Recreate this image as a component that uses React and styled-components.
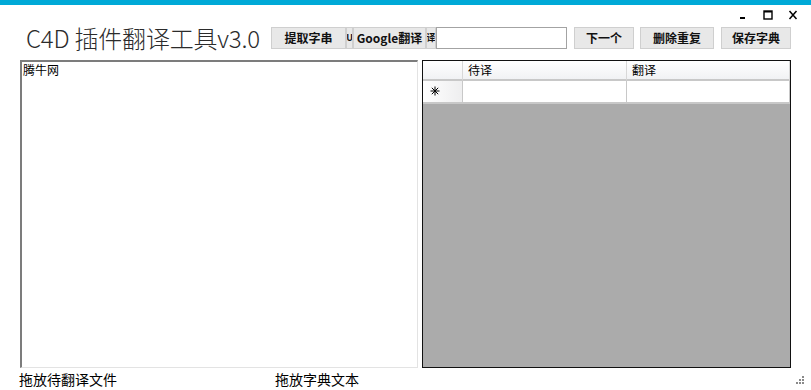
import React from 'react';
import styled, { createGlobalStyle } from 'styled-components';

const GlobalStyle = createGlobalStyle`
    html, body {
        margin: 0;
        padding: 0;
        background: #ffffff;
    }
    * {
        box-sizing: border-box;
    }
`;

const Window = styled.div`
    width: 811px;
    height: 390px;
    display: flex;
    flex-direction: column;
    background: #ffffff;
    font-family: "Noto Sans CJK SC", "Liberation Sans", sans-serif;
    color: #000;
    overflow: hidden;
    position: relative;
`;

const Stripe = styled.div`
    height: 5px;
    background-color: #00a9d7;
`;

const Controls = styled.div`
    height: 20px;
    display: flex;
    justify-content: flex-end;
    align-items: center;
    gap: 15px;
    padding-right: 13px;
`;

const CtrlIcon = styled.svg`
    width: 10px;
    height: 10px;
    display: block;
`;

const Toolbar = styled.div`
    height: 26px;
    display: flex;
    align-items: center;
    padding-left: 26px;
`;

const Title = styled.div`
    font-size: 24px;
    font-weight: 300;
    color: #2b2b2b;
    letter-spacing: -0.2px;
    line-height: 26px;
    width: 245px;
    white-space: nowrap;
`;

const Button = styled.div`
    height: 22px;
    width: ${p => p.w}px;
    margin-left: ${p => p.gap || 0}px;
    display: flex;
    align-items: center;
    justify-content: center;
    background: #e8e8e8;
    border: 1px solid #cfcfcf;
    font-size: ${p => p.fs || 12}px;
    font-weight: 700;
    white-space: nowrap;
    overflow: hidden;
    color: #111;
    padding: 0;
`;

const Input = styled.div`
    width: 131px;
    height: 22px;
    border: 1px solid #a3a3a3;
    background: #fff;
`;

const Main = styled.div`
    display: flex;
    gap: 4px;
    margin-top: 9px;
    padding-left: 20px;
    height: 309px;
`;

const TextArea = styled.div`
    width: 398px;
    height: 100%;
    border-top: 2px solid #7c7c7c;
    border-left: 2px solid #7c7c7c;
    border-right: 1px solid #e3e3e3;
    border-bottom: 1px solid #e3e3e3;
    padding: 1px 1px;
    font-size: 12px;
    line-height: 14px;
`;

const Grid = styled.div`
    width: 369px;
    height: 100%;
    border: 1px solid #111;
    background: #ababab;
    display: flex;
    flex-direction: column;
`;

const GridRow = styled.div`
    display: grid;
    grid-template-columns: 40px 164px 1fr;
    height: ${p => p.h}px;
`;

const HeadCell = styled.div`
    background: linear-gradient(#ffffff, #f1f2f4);
    border-right: 1px solid #d8d8d8;
    border-bottom: 2px solid #c8c8c8;
    font-size: 12px;
    line-height: 17px;
    padding-left: 5px;
`;

const RowHead = styled.div`
    background: linear-gradient(90deg, #ffffff, #eeeeef);
    border-right: 1px solid #c8c8c8;
    border-bottom: 2px solid #c8c8c8;
    display: flex;
    align-items: center;
    padding-left: 7px;
`;

const Cell = styled.div`
    background: #fff;
    border-right: 1px solid #c8c8c8;
    border-bottom: 2px solid #c8c8c8;
`;

const Footer = styled.div`
    display: flex;
    align-items: center;
    height: 22px;
    padding-left: 19px;
    font-size: 14px;
    line-height: 16px;
`;

const Label = styled.div`
    width: ${p => p.w}px;
    white-space: nowrap;
`;

const Grip = styled.div`
    position: absolute;
    right: 7px;
    bottom: 6px;
    width: 7px;
    height: 8px;
`;

const Dot = styled.span`
    position: absolute;
    width: 2px;
    height: 2px;
    background: #8a8a8a;
`;

export default function App() {
    const dots = [[5, 0], [5, 3], [2, 3], [5, 6], [2, 6], [-1, 6]];
    return (
        <Window>
            <GlobalStyle />
            <Stripe />
            <Controls>
                <CtrlIcon viewBox="0 0 10 10">
                    <rect x="2" y="7" width="5" height="2" fill="#000" />
                </CtrlIcon>
                <CtrlIcon viewBox="0 0 10 10">
                    <rect x="1" y="1" width="8" height="8" fill="none" stroke="#000" strokeWidth="1.4" />
                    <rect x="1" y="1" width="8" height="1.5" fill="#000" />
                </CtrlIcon>
                <CtrlIcon viewBox="0 0 10 10">
                    <path d="M1.5 1 L8.5 9 M8.5 1 L1.5 9" stroke="#000" strokeWidth="1.5" />
                </CtrlIcon>
            </Controls>
            <Toolbar>
                <Title>C4D 插件翻译工具v3.0</Title>
                <Button w={75}>提取字串</Button>
                <Button w={7} fs={9}>U</Button>
                <Button w={73}>Google翻译</Button>
                <Button w={10} fs={9}>译</Button>
                <Input />
                <Button w={60} gap={7}>下一个</Button>
                <Button w={74} gap={6}>删除重复</Button>
                <Button w={70} gap={7}>保存字典</Button>
            </Toolbar>
            <Main>
                <TextArea>腾牛网</TextArea>
                <Grid>
                    <GridRow h={20}>
                        <HeadCell />
                        <HeadCell>待译</HeadCell>
                        <HeadCell>翻译</HeadCell>
                    </GridRow>
                    <GridRow h={23}>
                        <RowHead>
                            <svg width="10" height="10" viewBox="0 0 10 10">
                                <path d="M5 0.5 V9.5 M0.5 5 H9.5 M1.8 1.8 L8.2 8.2 M8.2 1.8 L1.8 8.2" stroke="#000" strokeWidth="1" />
                            </svg>
                        </RowHead>
                        <Cell />
                        <Cell />
                    </GridRow>
                </Grid>
            </Main>
            <Footer>
                <Label w={256}>拖放待翻译文件</Label>
                <Label w={100}>拖放字典文本</Label>
            </Footer>
            <Grip>
                {dots.map(([x, y], i) => (
                    <Dot key={i} style={{ left: x, top: y }} />
                ))}
            </Grip>
        </Window>
    );
}
